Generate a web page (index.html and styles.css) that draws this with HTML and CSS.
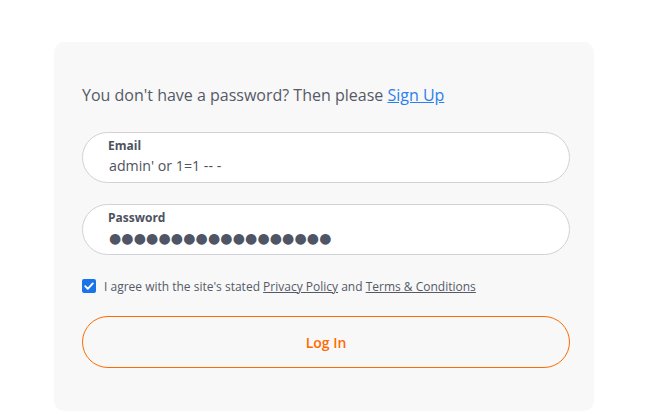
FILE: index.html
```html
<!DOCTYPE html>
<html>
<head>
<meta charset="utf-8">
<link rel="stylesheet" href="styles.css">
</head>
<body>
<div class="card">
  <p class="intro">You don't have a password? Then please <a href="#" class="signup">Sign Up</a></p>
  <div class="field">
    <label class="label">Email</label>
    <div class="value">admin' or 1=1 -- -</div>
  </div>
  <div class="field">
    <label class="label">Password</label>
    <div class="value dots">●●●●●●●●●●●●●●●●●●</div>
  </div>
  <div class="agree">
    <span class="check"><svg width="14" height="14" viewBox="0 0 14 14"><rect width="14" height="14" rx="2" fill="#1a73e8"/><path d="M3.2 7.2 L5.8 9.8 L10.8 4.4" fill="none" stroke="#fff" stroke-width="1.9" stroke-linecap="round" stroke-linejoin="round"/></svg></span>
    <span class="agree-text">I agree with the site's stated <a href="#">Privacy Policy</a> and <a href="#">Terms &amp; Conditions</a></span>
  </div>
  <button class="login">Log In</button>
</div>
</body>
</html>
```
FILE: styles.css
```css
html, body {
  margin: 0;
  padding: 0;
  background: #fff;
}
body {
  font-family: "Open Sans", sans-serif;
  padding: 42px 0 0 54px;
}
.card {
  width: 540px;
  height: 369px;
  box-sizing: border-box;
  background: #f8f8f8;
  border-radius: 10px;
  padding: 41px 24px 0 28px;
  display: flex;
  flex-direction: column;
}
.intro {
  margin: 0 0 25px;
  font-size: 16px;
  line-height: 24px;
  color: #555a66;
}
.signup {
  color: #2b7ff0;
  text-decoration: underline;
}
.field {
  height: 51px;
  box-sizing: border-box;
  background: #fff;
  border: 1px solid #d2d2d6;
  border-radius: 26px;
  padding: 4px 25px 0;
  margin-bottom: 21px;
  display: flex;
  flex-direction: column;
}
.label {
  font-size: 12px;
  font-weight: 700;
  line-height: 18px;
  color: #4d5260;
}
.value {
  font-size: 14.2px;
  line-height: 22px;
  color: #4d5260;
  padding-left: 1px;
}
.dots {
  font-family: "DejaVu Sans", sans-serif;
  font-size: 14px;
  letter-spacing: 0.15px;
  color: #4f5565;
}
.agree {
  display: flex;
  align-items: center;
  gap: 8px;
  margin-top: 0;
  height: 20px;
}
.check {
  display: flex;
}
.agree-text {
  font-size: 12px;
  color: #555a66;
}
.agree-text a {
  color: #555a66;
  text-decoration: underline;
}
.login {
  margin-top: 20px;
  height: 52px;
  border: 1px solid #ff6a00;
  border-radius: 26px;
  background: transparent;
  font-family: "Open Sans", sans-serif;
  font-size: 14px;
  font-weight: 600;
  color: #ff6a00;
}
```
